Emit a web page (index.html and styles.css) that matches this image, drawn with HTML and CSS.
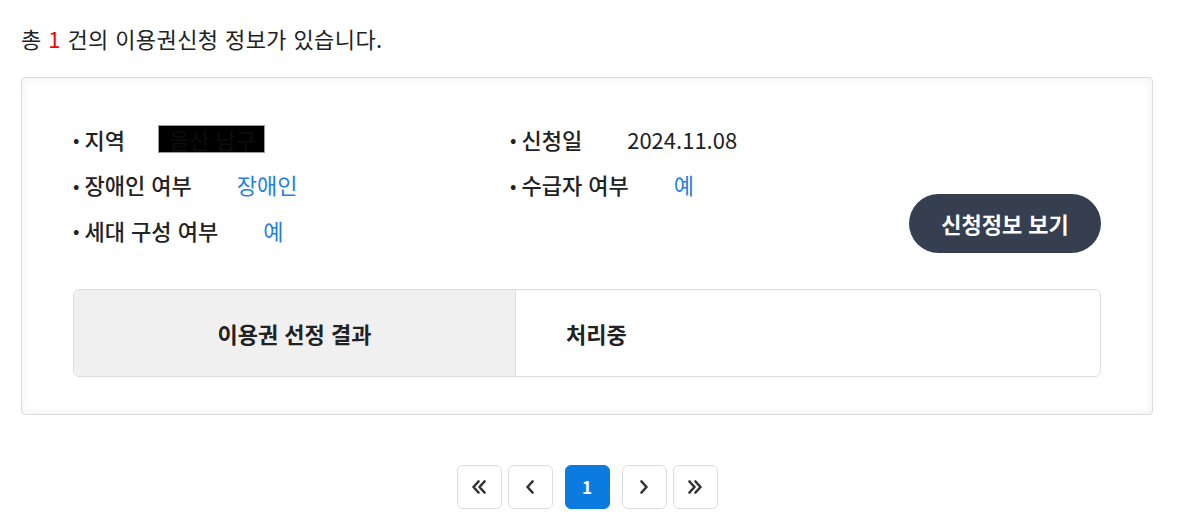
FILE: index.html
```
<!DOCTYPE html>
<html lang="ko">
  <head>
  	<meta charset="utf-8">
  	<title>이용권신청 조회</title>
  	<link rel="stylesheet" href="styles.css">
  </head>
<body>

	<div class="wrap">
		<p class="total">총 <em>1</em> 건의 이용권신청 정보가 있습니다.</p>

		<div class="card">
			<div class="info">
				<ul class="col">
					<li><span class="lbl">지역</span><span class="masked">울산 남구</span></li>
					<li><span class="lbl">장애인 여부</span><span class="val">장애인</span></li>
					<li><span class="lbl">세대 구성 여부</span><span class="val">예</span></li>
				</ul>
				<ul class="col">
					<li><span class="lbl">신청일</span><span class="date">2024.11.08</span></li>
					<li><span class="lbl">수급자 여부</span><span class="val">예</span></li>
				</ul>
				<div class="btn-area">
					<input type="button" value="신청정보 보기" class="btn-view">
				</div>
			</div>

			<div class="result">
				<div class="th">이용권 선정 결과</div>
				<div class="td">처리중</div>
			</div>
		</div>

		<!-- 페이지 이동 -->
		<div class="paging">
			<a href="#" class="pg" title="처음">
				<svg width="16" height="14" viewBox="0 0 16 14"><path d="M7.5 1.5 2.5 7l5 5.5M13.5 1.5 8.5 7l5 5.5"/></svg>
			</a>
			<a href="#" class="pg" title="이전">
				<svg width="10" height="14" viewBox="0 0 10 14"><path d="M7.5 1.5 2.5 7l5 5.5"/></svg>
			</a>
			<a href="#" class="pg on">1</a>
			<a href="#" class="pg" title="다음">
				<svg width="10" height="14" viewBox="0 0 10 14"><path d="M2.5 1.5 7.5 7l-5 5.5"/></svg>
			</a>
			<a href="#" class="pg" title="마지막">
				<svg width="16" height="14" viewBox="0 0 16 14"><path d="M2.5 1.5 7.5 7l-5 5.5M8.5 1.5 13.5 7l-5 5.5"/></svg>
			</a>
		</div>
	</div>

</body>
</html>
```

FILE: styles.css
```
body {
	margin: 0;
	font-family: "Noto Sans CJK KR", "Noto Sans", sans-serif;
	color: #222;
	background: #fff;
}
.wrap {
	width: 1132px;
	padding: 0 0 0 21px;
}
.total {
	margin: 0;
	padding: 23px 0 0;
	font-size: 22px;
	line-height: 30px;
	letter-spacing: 0.4px;
}
.total em {
	font-style: normal;
	color: #f00;
}
.card {
	margin-top: 24px;
	border: 1px solid #ddd;
	border-radius: 4px;
	box-shadow: inset 0 0 12px rgba(0,0,0,0.06);
	padding: 38px 51px 37px;
}
.info {
	display: grid;
	grid-template-columns: 437px 1fr auto;
	align-items: end;
}
.col {
	list-style: none;
	margin: 0;
	padding: 0;
	align-self: start;
}
.col li {
	display: flex;
	align-items: center;
	height: 45.5px;
	font-size: 22px;
}
.col li:before {
	content: "•";
	font-size: 19px;
	margin-right: 5px;
}
.lbl {
	font-weight: 500;
	margin-right: 45px;
}
.val {
	color: #1f7fe2;
}
.masked {
	display: inline-block;
	background: #000;
	color: #0d0d0d;
	border: 1px solid #999;
	padding: 0 8px 0 10px;
	line-height: 26px;
	margin-left: -12px;
}
.btn-view {
	border: 0;
	background: #353f4f;
	color: #fff;
	border-radius: 30px;
	width: 192px;
	height: 59px;
	font-family: inherit;
	font-size: 22px;
	font-weight: 700;
	cursor: pointer;
}
.result {
	display: flex;
	margin-top: 36px;
	border: 1px solid #ddd;
	border-radius: 6px;
	height: 86px;
	overflow: hidden;
	font-size: 22px;
	font-weight: 700;
}
.result .th {
	width: 441px;
	background: #f0f0f0;
	border-right: 1px solid #ddd;
	display: flex;
	align-items: center;
	justify-content: center;
}
.result .td {
	display: flex;
	align-items: center;
	padding-left: 50px;
}
.paging {
	display: flex;
	justify-content: center;
	gap: 6px;
	margin-top: 50px;
}
.pg {
	width: 43px;
	height: 42px;
	border: 1px solid #ddd;
	border-radius: 6px;
	background: #fff;
	color: #333;
	text-decoration: none;
	display: flex;
	align-items: center;
	justify-content: center;
}
.pg svg path {
	fill: none;
	stroke: #333;
	stroke-width: 2.6;
	stroke-linecap: round;
	stroke-linejoin: round;
}
.pg.on {
	margin: 0 6px;
	background: #0b7be0;
	border-color: #0b7be0;
	color: #fff;
	font-size: 17px;
	font-weight: 700;
}
```
